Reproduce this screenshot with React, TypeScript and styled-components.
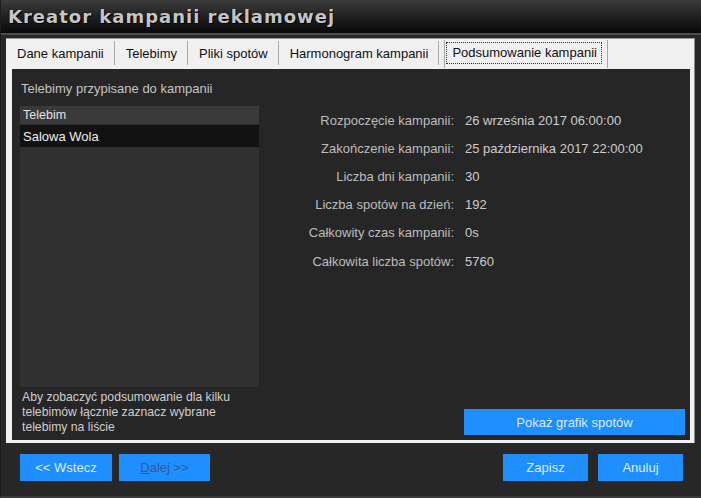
import React from 'react';
import styled, { createGlobalStyle } from 'styled-components';

const GlobalStyle = createGlobalStyle`
  html, body {
    margin: 0;
    padding: 0;
    background: #272727;
  }
  body {
    font-family: "Liberation Sans", Arial, sans-serif;
  }
`;

const Window = styled.div`
  width: 701px;
  height: 498px;
  display: flex;
  flex-direction: column;
  background: #272727;
  box-sizing: border-box;
  border-left: 1px solid #1c1c1c;
  border-bottom: 2px solid #3a3a3a;
  overflow: hidden;
`;

const TitleBar = styled.div`
  height: 33px;
  flex: none;
  display: flex;
  align-items: center;
  padding-left: 7px;
  background: linear-gradient(to bottom, #3c3c3c 0%, #1e1e1e 55%, #080808 100%);
  border-bottom: 2px solid #4c4c4c;
`;

const Title = styled.h1`
  margin: 0;
  font-family: "DejaVu Sans", Verdana, sans-serif;
  font-weight: bold;
  font-size: 18px;
  letter-spacing: 1px;
  color: #c4c4c4;
  text-shadow: 1px 1px 0 #000, -1px 0 0 #111;
`;

const Body = styled.div`
  flex: none;
  padding: 3px 6px 0 5px;
`;

const TabFrame = styled.div`
  height: 405px;
  box-sizing: border-box;
  display: flex;
  flex-direction: column;
  background: #f0f0f0;
  border-right: 1px solid #8a8a8a;
  border-top: 1px solid #9a9a9a;
  padding: 0 4px 4px 6px;
`;

const TabStrip = styled.div`
  height: 30px;
  flex: none;
  display: flex;
  align-items: flex-start;
  padding-top: 1px;
  margin-left: -6px;
  box-sizing: border-box;
`;

const Tab = styled.div<{ $active?: boolean }>`
  height: ${(p) => (p.$active ? '28px' : '24px')};
  margin-top: ${(p) => (p.$active ? '0' : '1px')};
  margin-left: ${(p) => (p.$active ? '5px' : '0')};
  padding: ${(p) => (p.$active ? '2px 5px 0 1px' : '0 10px 0 11px')};
  box-sizing: border-box;
  display: flex;
  align-items: ${(p) => (p.$active ? 'flex-start' : 'center')};
  font-size: 13px;
  color: #111;
  background: #f0f0f0;
  border-right: 1px solid #a8a8a8;
  border-left: ${(p) => (p.$active ? '1px solid #a8a8a8' : 'none')};
  position: relative;
  z-index: ${(p) => (p.$active ? 1 : 0)};
`;

const FocusLabel = styled.span`
  display: block;
  border: 1px dotted #333;
  padding: 2px 4px 2px 5px;
  line-height: 16px;
`;

const TabContent = styled.div`
  flex: 1;
  background: #262626;
  display: flex;
  padding: 0 5px 5px 8px;
`;

const LeftColumn = styled.div`
  width: 239px;
  flex: none;
  display: flex;
  flex-direction: column;
`;

const SectionLabel = styled.div`
  height: 37px;
  display: flex;
  align-items: center;
  padding: 2px 0 0 1px;
  box-sizing: border-box;
  font-size: 13px;
  color: #c4c4c4;
`;

const ListBox = styled.div`
  height: 281px;
  flex: none;
  background: #303030;
  display: flex;
  flex-direction: column;
`;

const ListHeader = styled.div`
  height: 18px;
  display: flex;
  align-items: center;
  padding-left: 3px;
  background: #3a3a3a;
  border-bottom: 1px solid #2c2c2c;
  font-size: 12.5px;
  color: #e2e2e2;
`;

const ListRow = styled.div<{ $selected?: boolean }>`
  height: 22px;
  display: flex;
  align-items: center;
  padding-left: 3px;
  background: ${(p) => (p.$selected ? '#121212' : 'transparent')};
  font-size: 13px;
  color: #ededed;
`;

const Note = styled.div`
  padding: 3px 0 0 2px;
  font-size: 12.2px;
  line-height: 15px;
  color: #cfcfcf;
`;

const RightColumn = styled.div`
  flex: 1;
  display: flex;
  flex-direction: column;
  justify-content: space-between;
  padding-top: 37px;
`;

const SummaryGrid = styled.div`
  display: grid;
  grid-template-columns: 195px 1fr;
  column-gap: 11px;
  grid-auto-rows: 28.2px;
  font-size: 13px;
  align-items: center;
`;

const SummaryLabel = styled.div`
  text-align: right;
  color: #bdbdbd;
`;

const SummaryValue = styled.div`
  color: #cdcdcd;
`;

const ActionRow = styled.div`
  display: flex;
  justify-content: flex-end;
`;

const BlueButton = styled.button<{ $width: number; $disabled?: boolean }>`
  width: ${(p) => p.$width}px;
  height: 27px;
  border: none;
  border-radius: 0;
  background: #1f8fff;
  color: ${(p) => (p.$disabled ? '#2d5a9a' : '#dcecfc')};
  font-family: "Liberation Sans", Arial, sans-serif;
  font-weight: normal;
  font-size: 13px;
  padding: 0;
  cursor: pointer;
  u {
    text-decoration: underline;
  }
`;

const WideButton = styled(BlueButton)`
  height: 26px;
`;

const Footer = styled.div`
  flex: 1;
  display: flex;
  align-items: flex-start;
  justify-content: space-between;
  padding: 11px 18px 0 19px;
`;

const ButtonGroup = styled.div`
  display: flex;
  gap: 7px;
`;

const RightButtonGroup = styled(ButtonGroup)`
  gap: 10px;
`;

const tabs = ['Dane kampanii', 'Telebimy', 'Pliki spotów', 'Harmonogram kampanii'];

const summary: [string, string][] = [
  ['Rozpoczęcie kampanii:', '26 września 2017 06:00:00'],
  ['Zakończenie kampanii:', '25 października 2017 22:00:00'],
  ['Liczba dni kampanii:', '30'],
  ['Liczba spotów na dzień:', '192'],
  ['Całkowity czas kampanii:', '0s'],
  ['Całkowita liczba spotów:', '5760'],
];

function App() {
  return (
    <>
      <GlobalStyle />
      <Window>
        <TitleBar>
          <Title>Kreator kampanii reklamowej</Title>
        </TitleBar>
        <Body>
          <TabFrame>
            <TabStrip>
              {tabs.map((t) => (
                <Tab key={t}>{t}</Tab>
              ))}
              <Tab $active>
                <FocusLabel>Podsumowanie kampanii</FocusLabel>
              </Tab>
            </TabStrip>
            <TabContent>
              <LeftColumn>
                <SectionLabel>Telebimy przypisane do kampanii</SectionLabel>
                <ListBox>
                  <ListHeader>Telebim</ListHeader>
                  <ListRow $selected>Salowa Wola</ListRow>
                </ListBox>
                <Note>
                  Aby zobaczyć podsumowanie dla kilku telebimów łącznie zaznacz wybrane telebimy na liście
                </Note>
              </LeftColumn>
              <RightColumn>
                <SummaryGrid>
                  {summary.map(([label, value]) => (
                    <React.Fragment key={label}>
                      <SummaryLabel>{label}</SummaryLabel>
                      <SummaryValue>{value}</SummaryValue>
                    </React.Fragment>
                  ))}
                </SummaryGrid>
                <ActionRow>
                  <WideButton $width={221}>Pokaż grafik spotów</WideButton>
                </ActionRow>
              </RightColumn>
            </TabContent>
          </TabFrame>
        </Body>
        <Footer>
          <ButtonGroup>
            <BlueButton $width={92}>&lt;&lt; Wstecz</BlueButton>
            <BlueButton $width={91} $disabled>
              <u>D</u>alej &gt;&gt;
            </BlueButton>
          </ButtonGroup>
          <RightButtonGroup>
            <BlueButton $width={85}>Zapisz</BlueButton>
            <BlueButton $width={85}>Anuluj</BlueButton>
          </RightButtonGroup>
        </Footer>
      </Window>
    </>
  );
}

export default App;
